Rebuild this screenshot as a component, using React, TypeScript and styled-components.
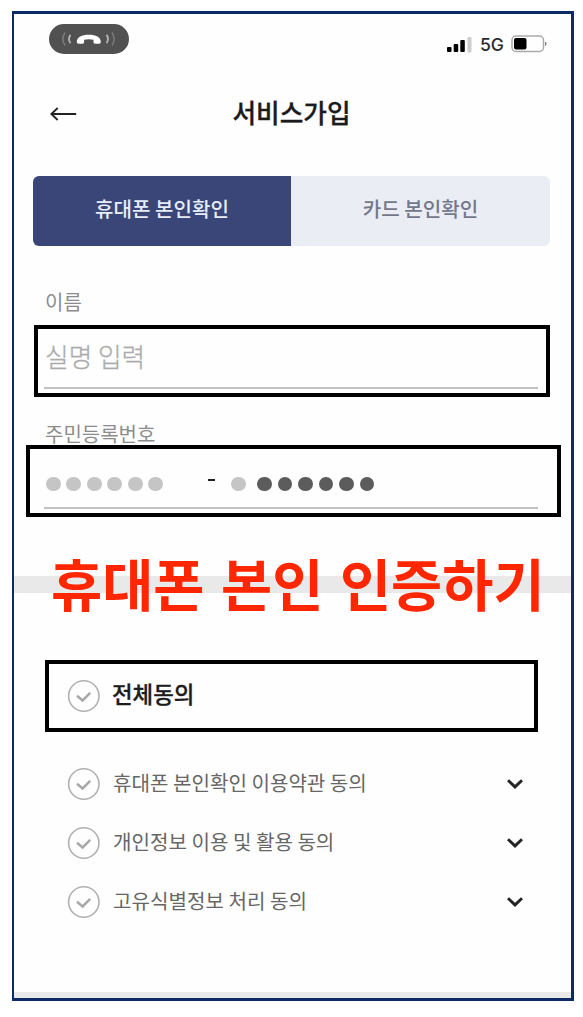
import React from 'react';
import styled, { createGlobalStyle } from 'styled-components';

const GlobalStyle = createGlobalStyle`
  *, *::before, *::after { box-sizing: border-box; }
  body {
    margin: 0;
    background: #fff;
    font-family: "Noto Sans CJK KR", "Noto Sans", sans-serif;
  }
  button { font: inherit; border: 0; padding: 0; background: none; }
`;

const Page = styled.div`
  height: 1017px;
  padding: 11px 9px 16px 12px;
`;

const Frame = styled.main`
  display: flex;
  flex-direction: column;
  height: 990px;
  border: solid #0c2a66;
  border-width: 3px 3px 3px 2px;
  background: #fefefe;
`;

const StatusBar = styled.div`
  display: flex;
  justify-content: space-between;
  height: 76px;
  padding: 10px 23px 0 35px;
`;

const CallPill = styled.div`
  display: flex;
  align-items: center;
  justify-content: center;
  width: 80px;
  height: 30px;
  border-radius: 15px;
  background: #515151;
`;

const Indicators = styled.div`
  display: flex;
  align-items: center;
  height: 40px;
`;

const Network = styled.span`
  margin: 1px 7px 0 8px;
  font: 500 17.6px/20px Inter, sans-serif;
  color: #2a2a2a;
`;

const TopBar = styled.header`
  display: grid;
  grid-template-columns: 36px 1fr 36px;
  align-items: center;
  height: 46px;
  padding: 0 32px 0 35px;
`;

const Title = styled.h1`
  margin: 0;
  padding: 0 5px 3px 0;
  font-size: 25.7px;
  font-weight: 500;
  line-height: 43px;
  -webkit-text-stroke: 0.3px currentColor;
  text-align: center;
  color: #1b1b1b;
`;

const Tabs = styled.div`
  display: flex;
  height: 70px;
  margin: 40px 21px 0 19px;
  border-radius: 6px;
  overflow: hidden;
`;

const Tab = styled.button<{ $active?: boolean }>`
  flex: ${p => (p.$active ? '0 0 258px' : '1')};
  padding-bottom: 6px;
  font-size: 20.1px;
  font-weight: 500;
  color: ${p => (p.$active ? '#e8edfb' : '#74778a')};
  background: ${p => (p.$active ? '#3a4677' : '#eaedf3')};
`;

const Label = styled.label<{ $top: number }>`
  height: 24px;
  margin: ${p => p.$top}px 0 0 31px;
  font-size: 20px;
  line-height: 24px;
  color: #8c8c8c;
`;

const Field = styled.div<{ $left: number; $right: number; $top: number }>`
  display: flex;
  flex-direction: column;
  height: 72px;
  margin: ${p => `${p.$top}px ${p.$right}px 0 ${p.$left}px`};
  padding: 0 ${p => 29 - p.$right}px 4px ${p => 26 - p.$left}px;
  border: 4px solid #000;
`;

const FieldLine = styled.div`
  display: flex;
  align-items: center;
  flex: 1;
  border-bottom: 2px solid #c2c2c2;
`;

const Placeholder = styled.span`
  padding: 0 0 4px 1px;
  font-size: 25.7px;
  font-weight: 300;
  line-height: 36px;
  -webkit-text-stroke: 0.3px currentColor;
  color: #ababab;
`;

const Dots = styled.div<{ $left: number; $dark?: boolean }>`
  display: flex;
  gap: 5.9px;
  margin: 12px 0 0 ${p => p.$left}px;
  color: ${p => (p.$dark ? '#5c5c5c' : '#c5c5c5')};
`;

const Dot = styled.i`
  width: 14.6px;
  height: 14.6px;
  border-radius: 50%;
  background: currentColor;
`;

const Dash = styled.span`
  width: 7px;
  height: 2px;
  margin: 3px 0 0 45px;
  background: #222;
`;

const Band = styled.div`
  position: relative;
  height: 17px;
  margin-top: 59px;
  background: #e9e9e9;
`;

const Headline = styled.h2`
  position: absolute;
  top: -34px;
  left: 37px;
  margin: 0;
  font-size: 55.6px;
  font-weight: 700;
  line-height: 80px;
  word-spacing: 4px;
  white-space: nowrap;
  color: #ff2600;
`;

const AgreeAll = styled.div`
  display: flex;
  align-items: center;
  height: 72px;
  margin: 67px 33px 0 31px;
  padding-left: 18px;
  border: 4px solid #000;
`;

const AgreeAllText = styled.strong`
  margin-left: 11px;
  padding-bottom: 6px;
  font-size: 22.4px;
  font-weight: 500;
  line-height: 32px;
  -webkit-text-stroke: 0.3px currentColor;
  color: #1c1c1c;
`;

const Terms = styled.ul`
  margin: 22px 47px 0 53px;
  padding: 0;
  list-style: none;
`;

const Term = styled.li`
  display: flex;
  align-items: center;
  height: 59px;
`;

const TermText = styled.span`
  flex: 1;
  margin-left: 12px;
  padding-bottom: 2px;
  font-size: 20.1px;
  line-height: 30px;
  color: #666;
`;

const BottomBand = styled.div`
  height: 6px;
  margin-top: auto;
  background: #e9e9e9;
`;

const Check = () => (
  <svg width="34" height="34" viewBox="0 0 34 34" fill="none">
    <circle cx="16.8" cy="17" r="15.2" stroke="#b0b0b0" strokeWidth="1.6" />
    <path d="M10 16.7l5.6 4.8 7.6-7.7" stroke="#a8a8a8" strokeWidth="2.5" />
  </svg>
);

const Chevron = () => (
  <svg width="18" height="14" viewBox="0 0 18 14" fill="none">
    <path d="M2 3.2l7 6.7 7-6.7" stroke="#242424" strokeWidth="2.9" />
  </svg>
);

const CallIcon = () => (
  <svg width="60" height="20" viewBox="0 0 60 20" fill="none">
    <path
      d="M17.8 13c0-5 5-7.200 12-7.200s12 2.200 12 7.200c0 1.300-.6 1.700-1.800 1.700h-3.800c-1.200 0-1.700-.5-1.700-1.600v-2.300c-3-.7-6.400-.7-9.400 0v2.300c0 1.100-.5 1.600-1.700 1.600h-3.800c-1.200 0-1.800-.4-1.800-1.700z"
      fill="#fff"
    />
    <path d="M11.500 5.700q-3 4.300 0 8.600M47.500 5.700q3 4.300 0 8.600" stroke="#b4b4b4" strokeWidth="1.800" />
    <path d="M6 3.500q-4.300 6.500 0 13M53 3.500q4.300 6.500 0 13" stroke="#7c7c7c" strokeWidth="1.500" />
  </svg>
);

const Signal = () => (
  <svg width="25" height="17" viewBox="0 0 25 17">
    <rect x="0" y="11" width="4.500" height="5" rx="1" />
    <rect x="6.700" y="8" width="4.500" height="8" rx="1" />
    <rect x="13.300" y="4" width="4.500" height="12" rx="1" />
    <rect x="20.500" y="1" width="4" height="15.500" rx="1" fill="#ccc" />
  </svg>
);

const Battery = () => (
  <svg width="37" height="18" viewBox="0 0 37 18" fill="none">
    <rect x="1" y="1" width="31.500" height="15.500" rx="4" stroke="#aaa" strokeWidth="1.500" />
    <rect x="3" y="3" width="12.500" height="11.500" rx="2" fill="#000" />
    <path d="M34.500 7v3.500q1.500-1.700 0-3.500z" fill="#888" stroke="#888" />
  </svg>
);

const BackArrow = () => (
  <svg width="30" height="18" viewBox="0 0 30 18" fill="none">
    <path d="M27.200 10H2.500M8.700 4L2.300 10l6.400 6" stroke="#222" strokeWidth="1.800" />
  </svg>
);

const dots = (n: number) => Array.from({ length: n }, (_, i) => <Dot key={i} />);

const terms = ['휴대폰 본인확인 이용약관 동의', '개인정보 이용 및 활용 동의', '고유식별정보 처리 동의'];

export default function App() {
  return (
    <Page>
      <GlobalStyle />
      <Frame>
        <StatusBar>
          <CallPill><CallIcon /></CallPill>
          <Indicators>
            <Signal />
            <Network>5G</Network>
            <Battery />
          </Indicators>
        </StatusBar>
        <TopBar>
          <BackArrow />
          <Title>서비스가입</Title>
        </TopBar>
        <Tabs>
          <Tab $active>휴대폰 본인확인</Tab>
          <Tab>카드 본인확인</Tab>
        </Tabs>
        <Label $top={44}>이름</Label>
        <Field $left={20} $right={21} $top={11}>
          <FieldLine><Placeholder>실명 입력</Placeholder></FieldLine>
        </Field>
        <Label $top={25}>주민등록번호</Label>
        <Field $left={12} $right={10} $top={-1}>
          <FieldLine>
            <Dots $left={2}>{dots(6)}</Dots>
            <Dash />
            <Dots $left={16}>{dots(1)}</Dots>
            <Dots $left={11.500} $dark>{dots(6)}</Dots>
          </FieldLine>
        </Field>
        <Band><Headline>휴대폰 본인 인증하기</Headline></Band>
        <AgreeAll>
          <Check />
          <AgreeAllText>전체동의</AgreeAllText>
        </AgreeAll>
        <Terms>
          {terms.map(t => (
            <Term key={t}>
              <Check />
              <TermText>{t}</TermText>
              <Chevron />
            </Term>
          ))}
        </Terms>
        <BottomBand />
      </Frame>
    </Page>
  );
}
